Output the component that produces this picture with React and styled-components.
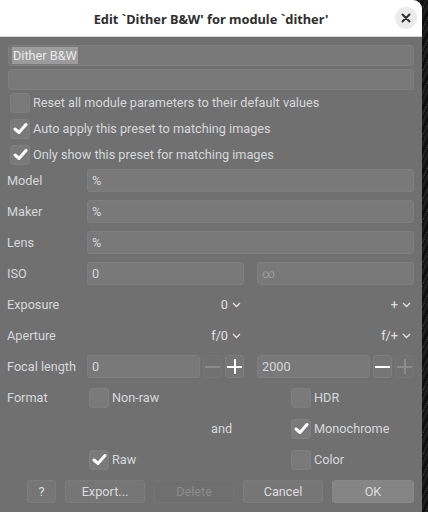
import React from "react";
import styled, { createGlobalStyle } from "styled-components";

const GlobalStyle = createGlobalStyle`
  html, body {
    margin: 0;
    padding: 0;
    width: 428px;
    height: 512px;
    overflow: hidden;
    background: #151515;
  }
  body {
    font-family: Roboto, "Noto Sans", sans-serif;
    font-size: 12.7px;
  }
`;

const Check = () => (
  <svg width="15" height="13" viewBox="0 0 15 13">
    <path
      d="M2 7 L6 10.5 L13 2.5"
      fill="none"
      stroke="#ffffff"
      strokeWidth="3"
      strokeLinecap="round"
      strokeLinejoin="round"
    />
  </svg>
);

const Chevron = () => (
  <svg width="9" height="6" viewBox="0 0 9 6">
    <polyline points="1,1 4.5,4.5 8,1" fill="none" stroke="#e2e2e2" strokeWidth="1.3" />
  </svg>
);

const App = () => {
  return (
    <>
      <GlobalStyle />
      <Page>
        <Dialog>
          <Header>
            <Title>Edit `Dither B&amp;W' for module `dither'</Title>
            <CloseBtn>
              <svg width="10" height="10" viewBox="0 0 10 10">
                <path d="M1.5 1.5 L8.5 8.5 M8.5 1.5 L1.5 8.5" stroke="#2e2e2e" strokeWidth="2" strokeLinecap="round" />
              </svg>
            </CloseBtn>
          </Header>
          <Body>
            <WideInput>
              <Selected>Dither B&amp;W</Selected>
            </WideInput>
            <WideInput $gap />
            <CheckList>
              <CheckRow>
                <Box />
                <span>Reset all module parameters to their default values</span>
              </CheckRow>
              <CheckRow>
                <Box><Check /></Box>
                <span>Auto apply this preset to matching images</span>
              </CheckRow>
              <CheckRow>
                <Box><Check /></Box>
                <span>Only show this preset for matching images</span>
              </CheckRow>
            </CheckList>
            <Form>
              <Label>Model</Label>
              <Field>%</Field>
              <Label>Maker</Label>
              <Field>%</Field>
              <Label>Lens</Label>
              <Field>%</Field>
              <Label>ISO</Label>
              <Pair>
                <Field>0</Field>
                <Field $dim>∞</Field>
              </Pair>
              <Label>Exposure</Label>
              <Pair>
                <Combo>0 <Chevron /></Combo>
                <Combo>+ <Chevron /></Combo>
              </Pair>
              <Label>Aperture</Label>
              <Pair>
                <Combo>f/0 <Chevron /></Combo>
                <Combo>f/+ <Chevron /></Combo>
              </Pair>
              <Label>Focal length</Label>
              <Pair>
                <Spin>
                  <Field>0</Field>
                  <SpinBtn><Minus /></SpinBtn>
                  <SpinBtn $lit><Plus $lit /></SpinBtn>
                </Spin>
                <Spin>
                  <Field>2000</Field>
                  <SpinBtn $lit><Minus $lit /></SpinBtn>
                  <SpinBtn><Plus /></SpinBtn>
                </Spin>
              </Pair>
              <Label>Format</Label>
              <FormatGrid>
                <CheckRow><Box />Non-raw</CheckRow>
                <span />
                <CheckRow><Box />HDR</CheckRow>
                <span />
                <And>and</And>
                <CheckRow><Box><Check /></Box>Monochrome</CheckRow>
                <CheckRow><Box><Check /></Box>Raw</CheckRow>
                <span />
                <CheckRow><Box />Color</CheckRow>
              </FormatGrid>
            </Form>
            <Buttons>
              <Button $w={29}>?</Button>
              <Button>Export...</Button>
              <Button $disabled>Delete</Button>
              <Button>Cancel</Button>
              <Button $w={82} $primary>OK</Button>
            </Buttons>
          </Body>
        </Dialog>
      </Page>
    </>
  );
};

export default App;

const Page = styled.div`
  width: 428px;
  height: 512px;
  background: repeating-linear-gradient(
    115deg,
    #0c0c0c 0px,
    #222222 3px,
    #0a0a0a 6px,
    #2e2e2e 9px
  );
`;

const Dialog = styled.div`
  width: 422px;
  height: 512px;
  background: #707070;
  border-top-right-radius: 9px;
  overflow: hidden;
`;

const Header = styled.div`
  position: relative;
  height: 36px;
  background: #ffffff;
  border-bottom: 1px solid #d6d6d6;
  display: flex;
  align-items: center;
  justify-content: center;
`;

const Title = styled.div`
  font-family: "Noto Sans", sans-serif;
  font-weight: 700;
  font-size: 12.8px;
  color: #2e2e2e;
  margin-top: 1px;
`;

const CloseBtn = styled.div`
  position: absolute;
  right: 5px;
  top: 7px;
  width: 22px;
  height: 22px;
  border-radius: 50%;
  background: #ebebeb;
  display: flex;
  align-items: center;
  justify-content: center;
`;

const Body = styled.div`
  padding: 8px 8px 0 8px;
  color: #d6d8da;
`;

const WideInput = styled.div`
  height: 19px;
  margin-top: ${(p) => (p.$gap ? "3px" : "0")};
  background: #797979;
  border: 1px solid #7e7e7e;
  border-radius: 3px;
  display: flex;
  align-items: center;
  padding-left: 3px;
`;

const Selected = styled.span`
  background: #9c9c9c;
  color: #e8e8e8;
  line-height: 17px;
  padding: 0 1px;
`;

const CheckList = styled.div`
  margin-top: 3px;
  display: flex;
  flex-direction: column;
  gap: 7px;
  padding-left: 2px;
`;

const CheckRow = styled.div`
  display: flex;
  align-items: center;
  gap: 3px;
  height: 19px;
`;

const Box = styled.div`
  width: 18px;
  height: 18px;
  flex: none;
  background: #7a7a7a;
  border: 1px solid #7f7f7f;
  border-radius: 3px;
  display: flex;
  align-items: center;
  justify-content: center;
`;

const Form = styled.div`
  margin-top: 5px;
  display: grid;
  grid-template-columns: 79px 1fr;
  grid-auto-rows: 23px;
  row-gap: 8px;
  align-items: center;
`;

const Label = styled.div`
  margin-left: -1px;
`;

const Field = styled.div`
  box-sizing: border-box;
  height: 23px;
  flex: 1;
  min-width: 0;
  background: #797979;
  border: 1px solid #7f7f7f;
  border-radius: 3px;
  padding-left: 4px;
  display: flex;
  align-items: center;
  color: ${(p) => (p.$dim ? "#9a9a9a" : "#d6d8da")};
`;

const Pair = styled.div`
  display: grid;
  grid-template-columns: 1fr 1fr;
  column-gap: 13px;
  height: 23px;
`;

const Combo = styled.div`
  display: flex;
  align-items: center;
  justify-content: flex-end;
  gap: 4px;
  padding-right: 3px;
  color: #e0e0e0;
`;

const Spin = styled.div`
  display: flex;
  gap: 3px;
`;

const SpinBtn = styled.div`
  box-sizing: border-box;
  width: 19px;
  height: 23px;
  flex: none;
  border: 1px solid ${(p) => (p.$lit ? "#7e7e7e" : "#757575")};
  background: ${(p) => (p.$lit ? "#767676" : "#717171")};
  border-radius: 3px;
  display: flex;
  align-items: center;
  justify-content: center;
`;

const Minus = styled.div`
  width: 15px;
  height: 2px;
  background: ${(p) => (p.$lit ? "#ffffff" : "#8c8c8c")};
`;

const Plus = styled.div`
  position: relative;
  width: 15px;
  height: 2px;
  background: ${(p) => (p.$lit ? "#ffffff" : "#8c8c8c")};
  &::after {
    content: "";
    position: absolute;
    left: 6.5px;
    top: -6.5px;
    width: 2px;
    height: 15px;
    background: inherit;
  }
`;

const FormatGrid = styled.div`
  grid-row: span 3;
  align-self: start;
  display: grid;
  grid-template-columns: 114px 88px 1fr;
  grid-auto-rows: 23px;
  row-gap: 8px;
  align-items: center;
  padding-left: 2px;
`;

const And = styled.div`
  margin-left: 8px;
`;

const Buttons = styled.div`
  margin-top: 9px;
  display: flex;
  justify-content: flex-end;
  gap: 9px;
  padding-right: 0;
`;

const Button = styled.div`
  box-sizing: border-box;
  width: ${(p) => p.$w || 80}px;
  height: 23px;
  border-radius: 3px;
  display: flex;
  align-items: center;
  justify-content: center;
  background: ${(p) => (p.$primary ? "#858585" : p.$disabled ? "#6f6f6f" : "#767676")};
  border: 1px solid ${(p) => (p.$primary ? "#888888" : p.$disabled ? "#747474" : "#7c7c7c")};
  color: ${(p) => (p.$disabled ? "#8c8c8c" : "#dcdcdc")};
`;
